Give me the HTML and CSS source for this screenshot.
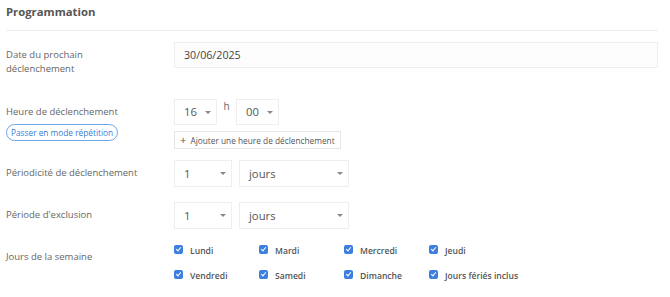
FILE: index.html
```html
<!DOCTYPE html>
<html lang="fr">
<head>
    <meta charset="UTF-8">
    <title>Programmation</title>
    <link rel="stylesheet" href="styles.css">
</head>
<body>
    <div class="panel">
        <h2 class="panel-title">Programmation</h2>

        <div class="row row-date">
            <label class="row-label">Date du prochain<br>déclenchement</label>
            <div class="row-field">
                <div class="input-text">30/06/2025</div>
            </div>
        </div>

        <div class="row row-hour">
            <div class="row-label">
                Heure de déclenchement
                <div><span class="pill">Passer en mode répétition</span></div>
            </div>
            <div class="row-field">
                <div class="inline">
                    <div class="select select-hour">16</div>
                    <span class="hour-sep">h</span>
                    <div class="select select-hour">00</div>
                </div>
                <div class="btn-add"><span class="plus">+</span> Ajouter une heure de déclenchement</div>
            </div>
        </div>

        <div class="row">
            <label class="row-label">Périodicité de déclenchement</label>
            <div class="row-field inline">
                <div class="select select-num">1</div>
                <div class="select select-unit">jours</div>
            </div>
        </div>

        <div class="row">
            <label class="row-label">Période d'exclusion</label>
            <div class="row-field inline">
                <div class="select select-num">1</div>
                <div class="select select-unit">jours</div>
            </div>
        </div>

        <div class="row row-days">
            <label class="row-label">Jours de la semaine</label>
            <div class="row-field days">
                <div class="day"><span class="check"></span>Lundi</div>
                <div class="day"><span class="check"></span>Mardi</div>
                <div class="day"><span class="check"></span>Mercredi</div>
                <div class="day"><span class="check"></span>Jeudi</div>
                <div class="day"><span class="check"></span>Vendredi</div>
                <div class="day"><span class="check"></span>Samedi</div>
                <div class="day"><span class="check"></span>Dimanche</div>
                <div class="day"><span class="check"></span>Jours fériés inclus</div>
            </div>
        </div>
    </div>
</body>
</html>
```

FILE: styles.css
```css
html, body {
    margin: 0;
    padding: 0;
    background-color: #fff;
}

.panel {
    width: 652px;
    padding: 0 12px 0 6px;
    font-family: "Open Sans", sans-serif;
    color: #666;
    font-size: 9.5px;
}

.panel-title {
    margin: 0 0 11px 0;
    height: 30px;
    line-height: 24px;
    font-size: 11.3px;
    font-weight: 700;
    color: #555;
    border-bottom: 1px solid #eee;
}

.row {
    display: grid;
    grid-template-columns: 168px 1fr;
    margin-bottom: 15px;
}

.row-date {
    margin-bottom: 23px;
}

.row-hour {
    margin-bottom: 11px;
}

.row-label {
    padding-top: 6px;
    line-height: 14px;
}

.inline {
    display: flex;
    align-items: flex-start;
}

.input-text {
    height: 26px;
    box-sizing: border-box;
    border: 1px solid #eee;
    background: #fdfdfd;
    padding: 0 9px;
    line-height: 24px;
    font-size: 10.7px;
    color: #444;
}

.select {
    position: relative;
    height: 27px;
    box-sizing: border-box;
    border: 1px solid #eee;
    background: #fff;
    padding-left: 9px;
    line-height: 25px;
    font-size: 11.3px;
    color: #555;
}

.select::after {
    content: "";
    position: absolute;
    right: 5px;
    top: 11px;
    border-left: 3px solid transparent;
    border-right: 3px solid transparent;
    border-top: 3px solid #888;
}

.select-hour {
    width: 43px;
    height: 26px;
    line-height: 24px;
}

.select-num {
    width: 58px;
}

.select-unit {
    width: 110px;
    margin-left: 7px;
}

.hour-sep {
    width: 19px;
    text-align: center;
    line-height: 15px;
    font-size: 10px;
    color: #666;
}

.btn-add {
    display: inline-block;
    margin-top: 6px;
    height: 18px;
    box-sizing: border-box;
    border: 1px solid #e6e6e6;
    padding: 0 5px 0 5px;
    line-height: 16px;
    font-size: 8.3px;
    color: #555;
}

.plus {
    font-size: 11px;
    margin-right: 2px;
}

.pill {
    display: inline-block;
    margin-top: 5px;
    height: 17px;
    box-sizing: border-box;
    border: 1px solid #6ea4e0;
    border-radius: 9px;
    padding: 0 4px;
    line-height: 15px;
    font-size: 8.3px;
    color: #3a7bd5;
}

.row-days .row-label {
    padding-top: 6px;
}

.days {
    display: grid;
    grid-template-columns: repeat(4, 85px);
    row-gap: 11px;
}

.day {
    display: flex;
    align-items: center;
    height: 14px;
    white-space: nowrap;
    font-size: 8.6px;
    font-weight: 600;
    color: #555;
}

.check {
    position: relative;
    flex-shrink: 0;
    width: 9px;
    height: 9px;
    margin: -3px 7px 0 0;
    border-radius: 2px;
    background: #3d7fe0;
}

.check::after {
    content: "";
    position: absolute;
    left: 3px;
    top: 1px;
    width: 2px;
    height: 4px;
    border-right: 1.5px solid #fff;
    border-bottom: 1.5px solid #fff;
    transform: rotate(40deg);
}
```
